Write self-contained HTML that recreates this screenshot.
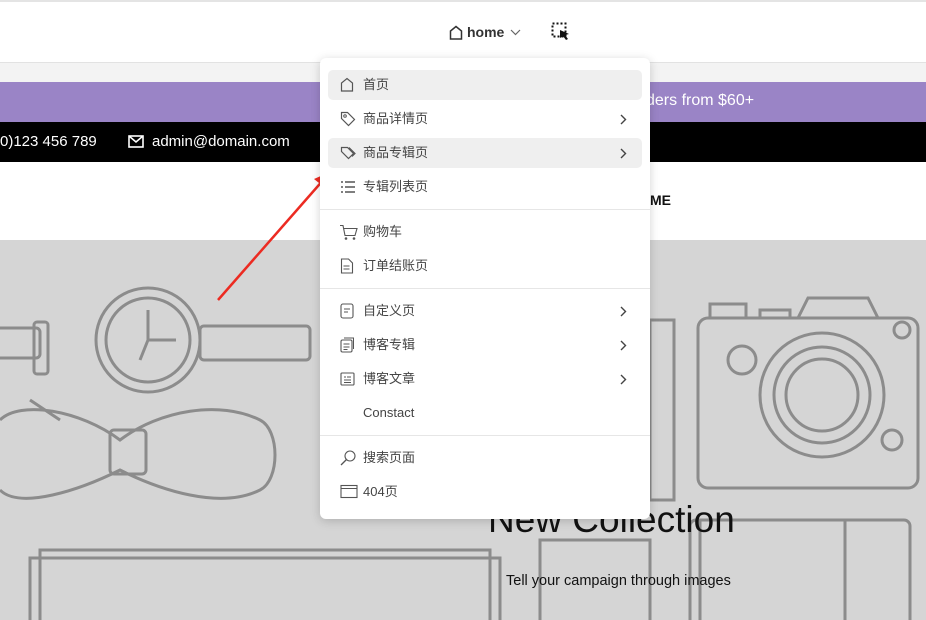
<!DOCTYPE html>
<html><head><meta charset="utf-8"><style>
*{margin:0;padding:0;box-sizing:border-box}
body{width:926px;height:620px;overflow:hidden;position:relative;font-family:"Liberation Sans","Noto Sans CJK SC",sans-serif;background:#fff}
.abs{position:absolute}
.menu{left:320px;top:58px;width:330px;height:461px;background:#fff;border-radius:6px;box-shadow:0 2px 10px rgba(0,0,0,.18)}
.it{position:absolute;left:8px;width:314px;height:30px;border-radius:5px;font-size:13px;color:#444;line-height:30px;padding-left:35px}
.it.hl{background:#efefef}
.it svg.ic{position:absolute;left:12px;top:7px}
.it svg.ch{position:absolute;right:15px;top:10px}
.sep{position:absolute;left:0;width:330px;height:1px;background:#e6e6e6}
</style></head><body>
<div class="abs" style="left:0;top:0;width:926px;height:2px;background:#e4e4e4"></div>
<div class="abs" style="left:0;top:62px;width:926px;height:20px;background:#f3f3f3;border-top:1px solid #e2e2e2"></div>
<div class="abs" style="left:0;top:82px;width:926px;height:40px;background:#9a84c6"></div>
<div class="abs" style="left:646px;top:92px;color:#fff;font-size:16px;font-weight:500">ders from $60+</div>
<div class="abs" style="left:0;top:122px;width:926px;height:40px;background:#000;color:#fff;font-size:15px;line-height:40px">
<span style="position:absolute;left:0">0)123 456 789</span>
<svg style="position:absolute;left:128px;top:13px" width="16" height="13" viewBox="0 0 16 13"><rect x="1" y="1" width="14" height="11" fill="none" stroke="#fff" stroke-width="1.6"/><path d="M1 1l7 6 7-6" fill="none" stroke="#fff" stroke-width="1.6"/></svg>
<span style="position:absolute;left:152px">admin@domain.com</span></div>
<div class="abs" style="left:650px;top:192px;font-size:14px;font-weight:bold;color:#111">ME</div>
<div class="abs" style="left:0;top:240px;width:926px;height:380px;background:#d5d5d5;overflow:hidden">
<svg width="926" height="380" fill="none" stroke="#8c8c8c" stroke-width="3">
<rect x="-10" y="88" width="50" height="30" rx="4"/><rect x="34" y="82" width="14" height="52" rx="3"/>
<circle cx="148" cy="100" r="52"/><circle cx="148" cy="100" r="42"/>
<path d="M148 70v30h28M148 100l-8 20"/>
<rect x="200" y="86" width="110" height="34" rx="4"/>
<path d="M30 160l30 20M0 180c20 -20 80 -10 120 20c40 -30 100 -40 140 -20c20 10 20 60 0 70c-40 20 -100 0 -140 -20c-40 20 -100 40 -120 20"/>
<rect x="110" y="190" width="36" height="44" rx="4"/>
<rect x="40" y="310" width="450" height="80"/><rect x="30" y="318" width="470" height="70"/>
<rect x="698" y="78" width="220" height="170" rx="10"/><circle cx="822" cy="155" r="62"/><circle cx="822" cy="155" r="48"/><circle cx="822" cy="155" r="36"/>
<circle cx="742" cy="120" r="14"/><circle cx="902" cy="90" r="8"/><circle cx="892" cy="200" r="10"/>
<rect x="710" y="64" width="36" height="14"/><rect x="760" y="70" width="30" height="8"/><path d="M798 78l10 -20h60l10 20"/>
<rect x="650" y="80" width="24" height="180"/>
<rect x="690" y="280" width="220" height="110" rx="6"/><path d="M700 280v110M845 280v110"/>
<rect x="540" y="300" width="110" height="90"/>
</svg></div>
<div class="abs" style="left:488px;top:499px;font-size:37px;color:#111">New Collection</div>
<div class="abs" style="left:506px;top:573px;font-size:14.5px;color:#111">Tell your campaign through images</div>
<svg class="abs" style="left:215px;top:168px" width="120" height="140"><path d="M3 132L110 10" stroke="#ec2b22" stroke-width="2.5"/><path d="M117 3l-18 8 10 8z" fill="#ec2b22"/></svg>
<svg class="abs" style="left:449px;top:25px" width="14" height="15" viewBox="0 0 14 15"><path d="M1.5 14V6L7 1.5 12.5 6V14Z" fill="none" stroke="#333" stroke-width="1.5"/></svg>
<div class="abs" style="left:467px;top:24px;font-size:14px;font-weight:bold;color:#333">home</div>
<svg class="abs" style="left:510px;top:29px" width="11" height="7"><path d="M1 1l4.5 4.5L10 1" fill="none" stroke="#666" stroke-width="1.2"/></svg>
<svg class="abs" style="left:551px;top:22px" width="20" height="20"><rect x="1.5" y="1.5" width="13" height="13" fill="none" stroke="#111" stroke-width="2" stroke-dasharray="2 2"/><path d="M9 8l9 4-4 1 3 4-2 1-3-4-3 2z" fill="#111"/></svg>
<div class="abs menu">
<div class="it hl" style="top:12px"><svg class="ic" width="14" height="15"><path d="M1.5 14V6L7 1.5 12.5 6V14Z" fill="none" stroke="#555" stroke-width="1.2"/></svg>首页</div>
<div class="it" style="top:46px"><svg class="ic" width="16" height="16"><path d="M1.5 1.5h6l7 7-6 6-7-7z" fill="none" stroke="#555" stroke-width="1.2"/><circle cx="5" cy="5" r="1.3" fill="none" stroke="#555"/></svg>商品详情页<svg class="ch" width="7" height="11"><path d="M1 1l4.5 4.5L1 10" fill="none" stroke="#444" stroke-width="1.4"/></svg></div>
<div class="it hl" style="top:80px"><svg class="ic" width="16" height="16"><path d="M1.5 2.5h6l6 6-5 5-7-7z" fill="none" stroke="#555" stroke-width="1.2"/><path d="M9 2.5l6 6-3 3" fill="none" stroke="#555" stroke-width="1.2"/></svg>商品专辑页<svg class="ch" width="7" height="11"><path d="M1 1l4.5 4.5L1 10" fill="none" stroke="#444" stroke-width="1.4"/></svg></div>
<div class="it" style="top:114px"><svg class="ic" width="16" height="16"><path d="M1 3h2M1 8h2M1 13h2M5 3h10M5 8h10M5 13h10" stroke="#555" stroke-width="1.5"/></svg>专辑列表页</div>
<div class="sep" style="top:151px"></div>
<div class="it" style="top:159px"><svg class="ic" width="18" height="17"><path d="M0 1.5h3l2 10h10l2-7H4" fill="none" stroke="#555" stroke-width="1.1"/><circle cx="6" cy="14.5" r="1.3" fill="#555"/><circle cx="14" cy="14.5" r="1.3" fill="#555"/></svg>购物车</div>
<div class="it" style="top:193px"><svg class="ic" width="14" height="16"><path d="M1.5 1h7l4 4v10h-11z M3.5 8h6M3.5 11h6" fill="none" stroke="#555" stroke-width="1.1"/></svg>订单结账页</div>
<div class="sep" style="top:230px"></div>
<div class="it" style="top:238px"><svg class="ic" width="14" height="16"><rect x="1" y="1" width="12" height="14" rx="2" fill="none" stroke="#555" stroke-width="1.1"/><path d="M4 6h6M4 9h4" stroke="#555"/></svg>自定义页<svg class="ch" width="7" height="11"><path d="M1 1l4.5 4.5L1 10" fill="none" stroke="#444" stroke-width="1.4"/></svg></div>
<div class="it" style="top:272px"><svg class="ic" width="16" height="16"><rect x="1" y="3" width="11" height="12" rx="1.5" fill="none" stroke="#555" stroke-width="1.1"/><path d="M4 1h9.5v11M3.5 7h6M3.5 10h6M3.5 12.5h4" fill="none" stroke="#555"/></svg>博客专辑<svg class="ch" width="7" height="11"><path d="M1 1l4.5 4.5L1 10" fill="none" stroke="#444" stroke-width="1.4"/></svg></div>
<div class="it" style="top:306px"><svg class="ic" width="16" height="16"><rect x="1" y="2" width="13" height="12" rx="1" fill="none" stroke="#555" stroke-width="1.1"/><path d="M4 6h2M7 6h4M4 9h7M4 11.5h7" stroke="#555"/></svg>博客文章<svg class="ch" width="7" height="11"><path d="M1 1l4.5 4.5L1 10" fill="none" stroke="#444" stroke-width="1.4"/></svg></div>
<div class="it" style="top:340px">Constact</div>
<div class="sep" style="top:377px"></div>
<div class="it" style="top:385px"><svg class="ic" width="16" height="16"><circle cx="10" cy="6" r="5" fill="none" stroke="#555" stroke-width="1.1"/><path d="M6.5 9.5L1 15" stroke="#555" stroke-width="1.3"/></svg>搜索页面</div>
<div class="it" style="top:419px"><svg class="ic" width="18" height="15"><rect x="1" y="1.5" width="16" height="12" fill="none" stroke="#555" stroke-width="1.1"/><path d="M1 4.5h16" stroke="#555"/></svg>404页</div>
</div>
</body></html>
